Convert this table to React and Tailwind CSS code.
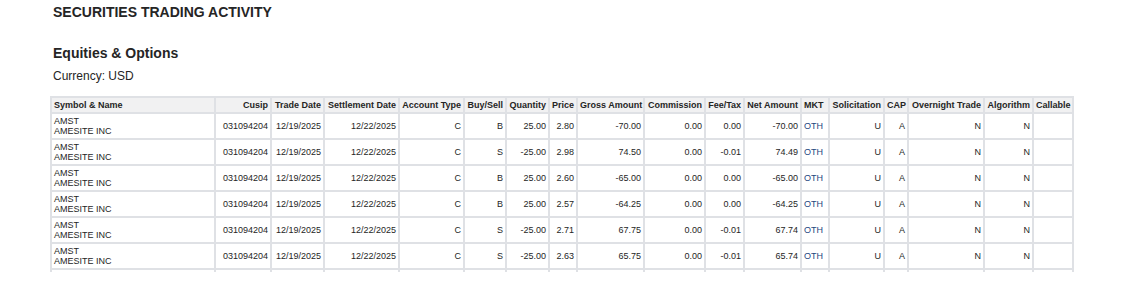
import React from "react";

const cols = [
  { label: "Symbol & Name", w: 162, align: "left" },
  { label: "Cusip", w: 54, align: "right" },
  { label: "Trade Date", w: 51, align: "right" },
  { label: "Settlement Date", w: 73, align: "right" },
  { label: "Account Type", w: 63, align: "right" },
  { label: "Buy/Sell", w: 40, align: "right" },
  { label: "Quantity", w: 41, align: "right" },
  { label: "Price", w: 26, align: "right" },
  { label: "Gross Amount", w: 65, align: "right" },
  { label: "Commission", w: 59, align: "right" },
  { label: "Fee/Tax", w: 37, align: "right" },
  { label: "Net Amount", w: 55, align: "right" },
  { label: "MKT", w: 26, align: "left" },
  { label: "Solicitation", w: 53, align: "right" },
  { label: "CAP", w: 22, align: "right" },
  { label: "Overnight Trade", w: 74, align: "right" },
  { label: "Algorithm", w: 47, align: "right" },
  { label: "Callable", w: 38, align: "left" },
];

const rows = [
  ["B", "25.00", "2.80", "-70.00", "0.00", "0.00", "-70.00"],
  ["S", "-25.00", "2.98", "74.50", "0.00", "-0.01", "74.49"],
  ["B", "25.00", "2.60", "-65.00", "0.00", "0.00", "-65.00"],
  ["B", "25.00", "2.57", "-64.25", "0.00", "0.00", "-64.25"],
  ["S", "-25.00", "2.71", "67.75", "0.00", "-0.01", "67.74"],
  ["S", "-25.00", "2.63", "65.75", "0.00", "-0.01", "65.74"],
];

export default function App() {
  return (
    <div
      className="bg-white w-[1140px] h-[303px] text-[#252525]"
      style={{ fontFamily: '"Liberation Sans", Arial, sans-serif' }}
    >
      <div className="pl-[53px] pt-[4px]">
        <h1 className="text-[14px] leading-[16px] font-bold">SECURITIES TRADING ACTIVITY</h1>
        <h2 className="mt-[25px] text-[14px] leading-[16px] font-bold">Equities &amp; Options</h2>
        <div className="mt-[8px] text-[12px] leading-[14px]">Currency: USD</div>
      </div>
      <div className="ml-[50px] mt-[13px] h-[176px] overflow-hidden w-[1024px]">
        <table className="table-fixed border-separate border-spacing-[2px] bg-[#dfe1e5] w-[1024px] text-[9px] leading-[10px]">
          <colgroup>
            {cols.map((c, i) => (
              <col key={i} style={{ width: c.w }} />
            ))}
          </colgroup>
          <thead>
            <tr className="h-[14px]">
              {cols.map((c, i) => (
                <th
                  key={i}
                  className={`bg-[#f1f1f2] font-bold px-[2px] py-[2px] whitespace-nowrap ${
                    c.align === "left" ? "text-left" : "text-right"
                  }`}
                >
                  {c.label}
                </th>
              ))}
            </tr>
          </thead>
          <tbody>
            {rows.map((r, i) => (
              <tr key={i} className="h-[24px]">
                <td className="bg-white px-[2px] py-[2px] text-left align-middle">
                  AMST
                  <br />
                  AMESITE INC
                </td>
                <td className="bg-white px-[2px] text-right">031094204</td>
                <td className="bg-white px-[2px] text-right">12/19/2025</td>
                <td className="bg-white px-[2px] text-right">12/22/2025</td>
                <td className="bg-white px-[2px] text-right">C</td>
                <td className="bg-white px-[2px] text-right">{r[0]}</td>
                <td className="bg-white px-[2px] text-right">{r[1]}</td>
                <td className="bg-white px-[2px] text-right">{r[2]}</td>
                <td className="bg-white px-[2px] text-right">{r[3]}</td>
                <td className="bg-white px-[2px] text-right">{r[4]}</td>
                <td className="bg-white px-[2px] text-right">{r[5]}</td>
                <td className="bg-white px-[2px] text-right">{r[6]}</td>
                <td className="bg-white px-[2px] text-left text-[#24477f]">OTH</td>
                <td className="bg-white px-[2px] text-right">U</td>
                <td className="bg-white px-[2px] text-right">A</td>
                <td className="bg-white px-[2px] text-right">N</td>
                <td className="bg-white px-[2px] text-right">N</td>
                <td className="bg-white px-[2px] text-left"></td>
              </tr>
            ))}
            <tr className="h-[24px]">
              {cols.map((c, i) => (
                <td key={i} className="bg-white"></td>
              ))}
            </tr>
          </tbody>
        </table>
      </div>
    </div>
  );
}
